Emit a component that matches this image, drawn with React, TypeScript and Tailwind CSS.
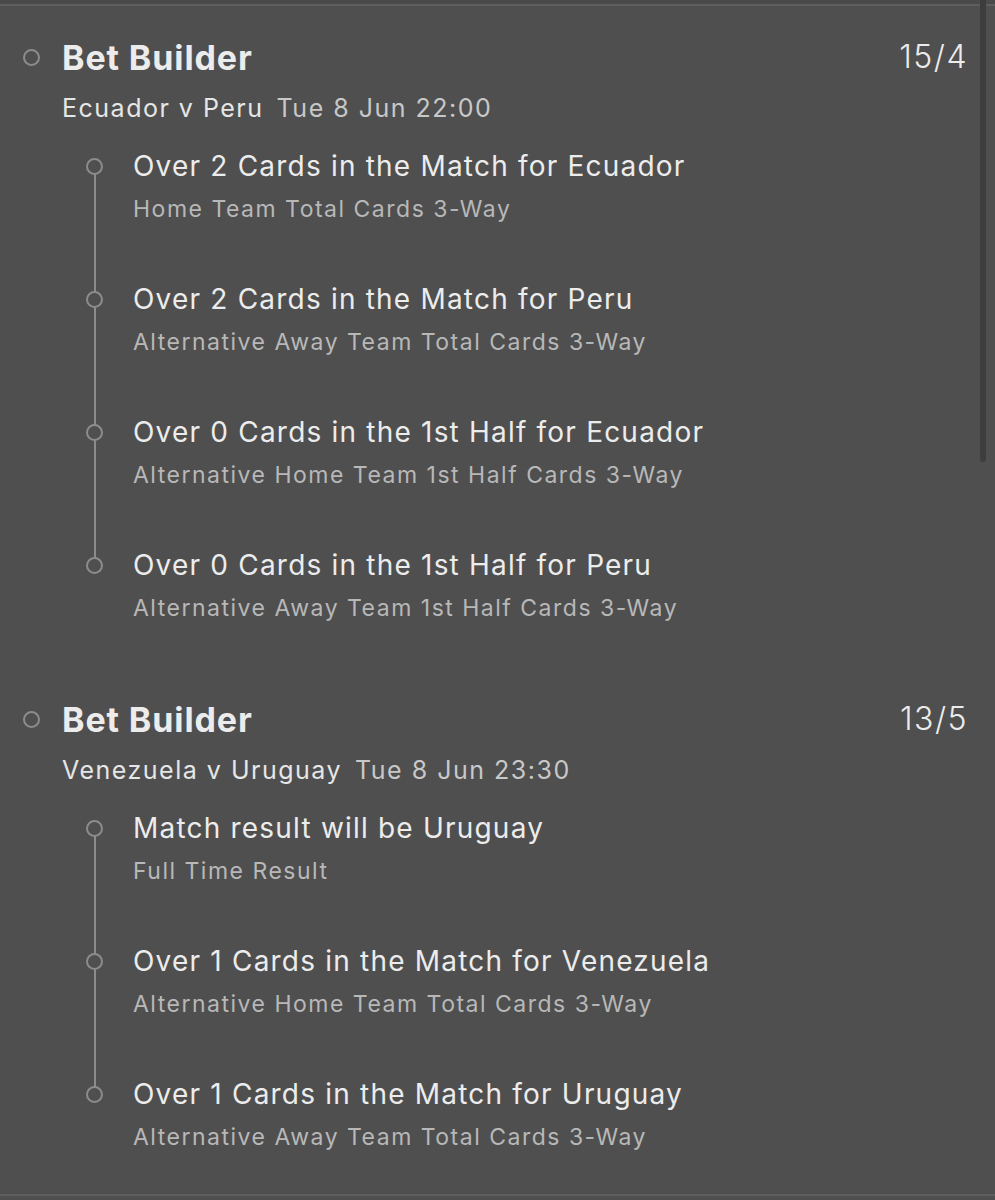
import React from 'react';

type Leg = { pick: string; market: string };
type Slip = { teams: string; kickoff: string; odds: string; legs: Leg[] };

const slips: Slip[] = [
  {
    teams: 'Ecuador v Peru',
    kickoff: 'Tue 8 Jun 22:00',
    odds: '15/4',
    legs: [
      { pick: 'Over 2 Cards in the Match for Ecuador', market: 'Home Team Total Cards 3-Way' },
      { pick: 'Over 2 Cards in the Match for Peru', market: 'Alternative Away Team Total Cards 3-Way' },
      { pick: 'Over 0 Cards in the 1st Half for Ecuador', market: 'Alternative Home Team 1st Half Cards 3-Way' },
      { pick: 'Over 0 Cards in the 1st Half for Peru', market: 'Alternative Away Team 1st Half Cards 3-Way' },
    ],
  },
  {
    teams: 'Venezuela v Uruguay',
    kickoff: 'Tue 8 Jun 23:30',
    odds: '13/5',
    legs: [
      { pick: 'Match result will be Uruguay', market: 'Full Time Result' },
      { pick: 'Over 1 Cards in the Match for Venezuela', market: 'Alternative Home Team Total Cards 3-Way' },
      { pick: 'Over 1 Cards in the Match for Uruguay', market: 'Alternative Away Team Total Cards 3-Way' },
    ],
  },
];

function Dot() {
  return <span className="relative z-10 block w-[17px] h-[17px] shrink-0 rounded-full border-2 border-[#8c8c8c] bg-[#4f4f4f]" />;
}

function SlipBlock({ slip }: { slip: Slip }) {
  return (
    <div>
      {/* header: title + odds */}
      <div className="flex items-center h-[40px] pl-[23px] pr-[27px]">
        <Dot />
        <span className="ml-[22px] text-[34px] font-bold text-[#ececec] tracking-[0.9px]">Bet Builder</span>
        <span className="ml-auto text-[32px] font-light text-[#ececec] tracking-[1.5px]">{slip.odds}</span>
      </div>
      <div className="mt-[15px] h-[32px] leading-[32px] pl-[62px] text-[25px] text-[#e6e6e6] tracking-[1.5px]">
        {slip.teams}
        <span className="ml-[13px] text-[#c8c8c8]">{slip.kickoff}</span>
      </div>

      {/* legs with connecting line */}
      <div className="relative mt-[25px] flex flex-col gap-[58px]">
        <div className="absolute left-[94px] top-[17px] bottom-[58px] w-[2px] bg-[#8c8c8c]" />
        {slip.legs.map((leg) => (
          <div key={leg.pick} className="flex flex-col pl-[86px]">
            <div className="flex items-center h-[34px]">
              <Dot />
              <span className="ml-[30px] text-[28px] text-[#ececec] tracking-[1.2px]">{leg.pick}</span>
            </div>
            <div className="mt-[11px] h-[30px] leading-[30px] pl-[47px] text-[23px] text-[#b8b8b8] tracking-[1.5px]">
              {leg.market}
            </div>
          </div>
        ))}
      </div>
    </div>
  );
}

export default function App() {
  return (
    <div
      className="relative w-[995px] h-[1200px] bg-[#4f4f4f] overflow-hidden"
      style={{ fontFamily: 'Inter, "Noto Sans", sans-serif' }}
    >
      <div className="h-[4px] bg-[#4a4a4a]" />
      <div className="h-[2px] bg-[#5e5e5e]" />
      <div className="pt-[31px] flex flex-col gap-[76px]">
        {slips.map((s) => (
          <SlipBlock key={s.teams} slip={s} />
        ))}
      </div>

      {/* overlay scrollbar */}
      <div className="absolute right-[9px] top-0 w-[6px] h-[462px] rounded-b-full bg-[#3d3d3d]" />
      <div className="absolute left-0 right-0 bottom-[4px] h-[2px] bg-[#5e5e5e]" />
    </div>
  );
}
